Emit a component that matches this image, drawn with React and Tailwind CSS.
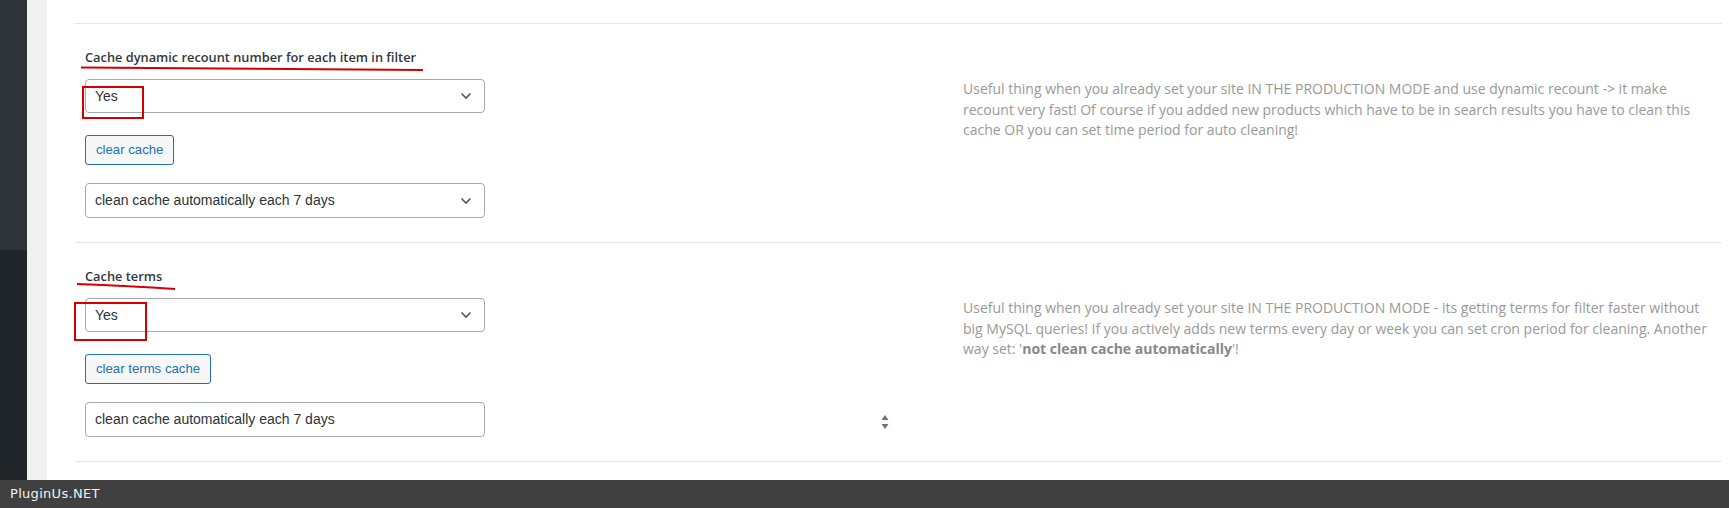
import React from "react";

const fontUi = "font-['Open_Sans','Noto_Sans',sans-serif]";
const fontCtl = "font-['Liberation_Sans',Arial,sans-serif]";

function Chevron() {
  return (
    <svg width="12" height="8" viewBox="0 0 12 8" className="absolute right-[12px] top-1/2 -translate-y-1/2">
      <path d="M1.5 1.5 L6 6 L10.5 1.5" fill="none" stroke="#50575e" strokeWidth="1.6" />
    </svg>
  );
}

function Select({ value }) {
  return (
    <div className={`relative flex h-[34px] w-[400px] items-center rounded-[4px] border border-[#a7aaad] bg-white pl-[9px] text-[14px] text-[#2c3338] ${fontCtl}`}>
      {value}
      <Chevron />
    </div>
  );
}

function Button({ children }) {
  return (
    <button
      type="button"
      className={`flex h-[30px] items-center rounded-[3px] border border-[#2271b1] bg-[#f6f7f7] px-[10px] text-[13.2px] text-[#2271b1] ${fontCtl}`}
    >
      {children}
    </button>
  );
}

function Spinner() {
  return (
    <svg width="8" height="16" viewBox="0 0 8 16" className="absolute left-[796px] top-[12px]">
      <path d="M4 1 L7.5 6 L0.5 6 Z" fill="#6b7280" />
      <path d="M0.5 10 L7.5 10 L4 15 Z" fill="#6b7280" />
    </svg>
  );
}

function Row({ title, children, desc }) {
  return (
    <div className="border-t border-[#e2e4e7] pl-[10px] pt-[23px] pb-[24px]">
      <div className={`h-[20px] text-[12.8px] font-semibold leading-[20px] text-[#32373c] ${fontUi}`}>{title}</div>
      <div className="mt-[12px] flex">
        <div className="relative flex w-[878px] flex-col items-start">{children}</div>
        <div className={`w-[750px] text-[14px] leading-[20.5px] text-[#999999] ${fontUi}`}>{desc}</div>
      </div>
    </div>
  );
}

export default function App() {
  return (
    <div className="relative flex h-[508px] w-[1729px] overflow-hidden bg-white">
      {/* admin menu */}
      <div className="flex w-[27px] flex-col">
        <div className="h-[250px] bg-[#2f3439]" />
        <div className="flex-1 bg-[#21262a]" />
      </div>
      <div className="w-[20px] bg-[#f1f1f1]" />

      <div className="flex-1 pl-[28px] pr-[7px] pt-[23px]">
        <Row
          title="Cache dynamic recount number for each item in filter"
          desc="Useful thing when you already set your site IN THE PRODUCTION MODE and use dynamic recount -> it make recount very fast! Of course if you added new products which have to be in search results you have to clean this cache OR you can set time period for auto cleaning!"
        >
          <Select value="Yes" />
          <div className="mt-[22px]">
            <Button>clear cache</Button>
          </div>
          <div className="mt-[18px]">
            <div className={`relative flex h-[35px] w-[400px] items-center rounded-[4px] border border-[#a7aaad] bg-white pl-[9px] text-[14px] text-[#2c3338] ${fontCtl}`}>
              clean cache automatically each 7 days
              <Chevron />
            </div>
          </div>
        </Row>
        <Row
          title="Cache terms"
          desc={
            <>
              Useful thing when you already set your site IN THE PRODUCTION MODE - its getting terms for filter faster without big MySQL queries! If you actively adds new terms every day or week you can set cron period for cleaning. Another way set: '<b className="font-bold text-[#888888]">not clean cache automatically</b>'!
            </>
          }
        >
          <Select value="Yes" />
          <div className="mt-[22px]">
            <Button>clear terms cache</Button>
          </div>
          <div className="relative mt-[18px] w-full">
            <div className={`flex h-[35px] w-[400px] items-center rounded-[4px] border border-[#a7aaad] bg-white pl-[9px] text-[14px] text-[#2c3338] ${fontCtl}`}>
              clean cache automatically each 7 days
            </div>
            <Spinner />
          </div>
        </Row>
        <div className="border-t border-[#e2e4e7]" />
      </div>

      {/* red annotations */}
      <svg className="pointer-events-none absolute left-0 top-0" width="1729" height="508">
        <path d="M81 67.5 Q 250 69.5 423 70" fill="none" stroke="#d40000" strokeWidth="2" />
        <path d="M77 284 Q 130 286 175 289" fill="none" stroke="#d40000" strokeWidth="2" />
      </svg>
      <div className="pointer-events-none absolute left-[82px] top-[86px] h-[33px] w-[62px] border-2 border-[#d40000]" />
      <div className="pointer-events-none absolute left-[74px] top-[302px] h-[39px] w-[73px] border-2 border-[#d40000]" />

      {/* bottom bar */}
      <div className="absolute bottom-0 left-0 flex h-[28px] w-full items-center bg-[#404040] pl-[10px]">
        <span className="font-['DejaVu_Sans',sans-serif] text-[13px] tracking-[0.3px] text-[#f2f2f2]">PluginUs.NET</span>
      </div>
    </div>
  );
}
